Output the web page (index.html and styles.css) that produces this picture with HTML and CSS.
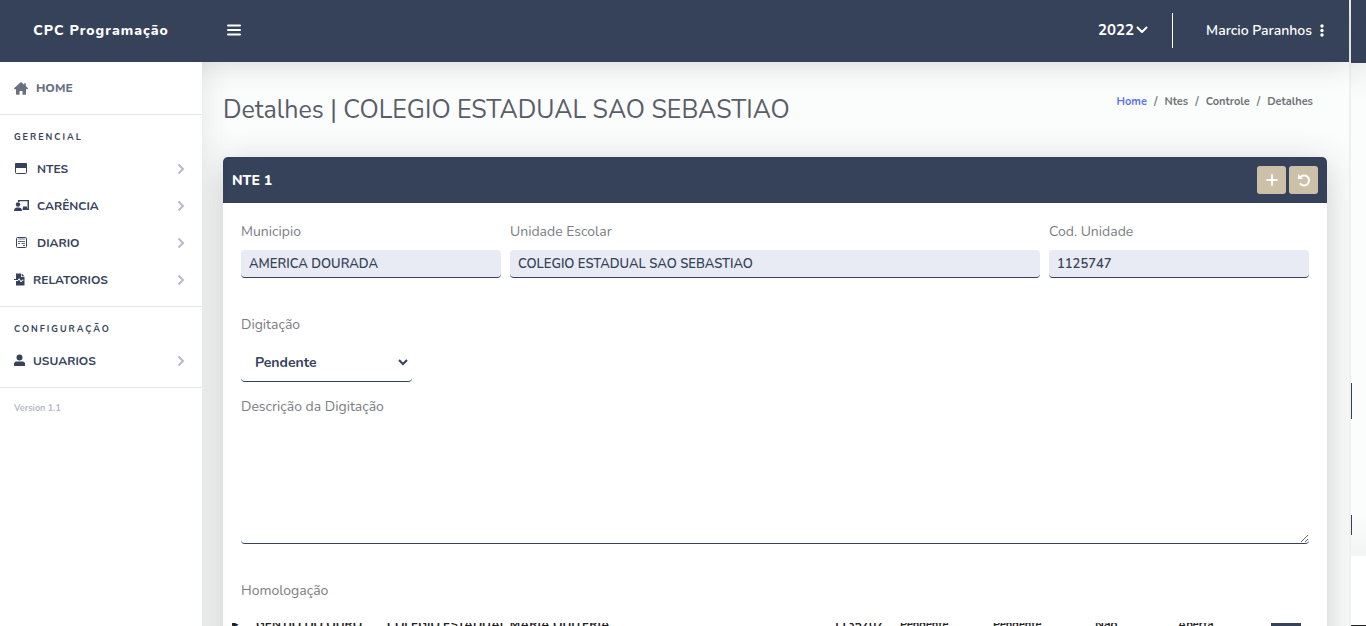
FILE: index.html
```html
<!DOCTYPE html>
<html lang="pt-BR">
<head>
<meta charset="utf-8">
<title>CPC Programação</title>
<link rel="stylesheet" href="styles.css">
</head>
<body>
<div class="screen">
  <div class="app">
    <header class="topbar">
      <a class="brand" href="#">CPC Programação</a>
      <button class="icon-button" aria-label="Menu"><svg width="14" height="12" viewBox="0 0 14 12"><path d="M1 1.500h12M1 6h12M1 10.500h12" stroke="#fff" stroke-width="2" stroke-linecap="round"/></svg></button>
      <button class="year">2022 <svg width="12" height="8" viewBox="0 0 12 8"><path d="M1.500 1.500 6 6l4.500-4.500" fill="none" stroke="#fff" stroke-width="2" stroke-linecap="round" stroke-linejoin="round"/></svg></button>
      <button class="user">Marcio Paranhos <svg width="4" height="13" viewBox="0 0 4 13" fill="#fff"><circle cx="2" cy="2" r="1.700"/><circle cx="2" cy="6.500" r="1.700"/><circle cx="2" cy="11" r="1.700"/></svg></button>
    </header>
    <div class="columns">
      <nav class="sidebar">
        <a class="home" href="#"><svg width="14" height="13" viewBox="0 0 14 13" fill="#69707f"><path d="M7 0 0 6.200q.2 1 1 1h1V12q0 .8.800.8h2.700V9h3v3.800h2.700q.8 0 .8-.8V7.200h1q.8 0 1-1L11.800 4V1.200h-1.600v1.500z"/></svg>HOME</a>
        <section class="group">
          <h2>GERENCIAL</h2>
          <a class="item" href="#"><svg class="glyph" width="15" height="13" viewBox="0 0 15 13"><rect x="1.500" y="1.500" width="11" height="10" rx="1" fill="#fff" stroke="#36425a"/><path d="M1 2q0-1 1-1h10q1 0 1 1v4H1z" fill="#36425a"/></svg><span>NTES</span><svg class="chevron" viewBox="0 0 8 12"><path d="m1.500 1.500 4.500 4.500-4.500 4.500"/></svg></a>
          <a class="item" href="#"><svg class="glyph" width="15" height="13" viewBox="0 0 15 13" fill="#36425a"><circle cx="4" cy="5.500" r="2.200"/><path d="M0 12q0-3.500 3.200-3.500h1.600Q8 8.500 8 12zM4 1h11v10H8.500V9.500h5V2.200h-8V3H4zM9 7.500h4V10H9z"/></svg><span>CARÊNCIA</span><svg class="chevron" viewBox="0 0 8 12"><path d="m1.500 1.500 4.500 4.500-4.500 4.500"/></svg></a>
          <a class="item" href="#"><svg class="glyph" width="15" height="13" viewBox="0 0 15 13" fill="none" stroke="#36425a"><rect x="2.500" y="1.500" width="10" height="10" rx="1"/><path d="M4 3.500 5 2.500l1 1 1-1 1 1 1-1 1 1 1-1M4 5.500h7M4 7.500h2M7.500 7.500H11M9 9.500h2" stroke-width=".8"/></svg><span>DIARIO</span><svg class="chevron" viewBox="0 0 8 12"><path d="m1.500 1.500 4.500 4.500-4.500 4.500"/></svg></a>
          <a class="item narrow" href="#"><svg class="glyph" width="11" height="13" viewBox="0 0 11 13"><path d="M2 .5h5V4h3.500v8.500H2zM7.700.5 10.500 3.300H7.700z" fill="#36425a"/><path d="M2 7.500h2l1.200-1.800L7 9l1-1.800h1.500" stroke="#fff" fill="none"/><path d="M0 6.500h3" stroke="#36425a"/></svg><span>RELATORIOS</span><svg class="chevron" viewBox="0 0 8 12"><path d="m1.500 1.500 4.500 4.500-4.500 4.500"/></svg></a>
        </section>
        <section class="group">
          <h2>CONFIGURAÇÃO</h2>
          <a class="item narrow" href="#"><svg class="glyph" width="11" height="13" viewBox="0 0 11 13" fill="#36425a"><circle cx="5.500" cy="3.500" r="3"/><path d="M0 12V10q0-2.500 2.500-2.500h6Q11 7.500 11 10v2z"/></svg><span>USUARIOS</span><svg class="chevron" viewBox="0 0 8 12"><path d="m1.500 1.500 4.500 4.500-4.500 4.500"/></svg></a>
        </section>
        <p class="version">Version 1.1</p>
      </nav>
      <main class="content">
        <div class="heading">
          <h1>Detalhes | COLEGIO ESTADUAL SAO SEBASTIAO</h1>
          <nav class="crumbs"><a href="#">Home</a><span>/</span><span>Ntes</span><span>/</span><span>Controle</span><span>/</span><span>Detalhes</span></nav>
        </div>
        <section class="card">
          <div class="card-head">
            <h2>NTE 1</h2>
            <button aria-label="Adicionar"><svg width="14" height="14" viewBox="0 0 14 14"><path d="M7 2v10M2 7h10" stroke="#fff" stroke-width="1.800" stroke-linecap="round"/></svg></button>
            <button aria-label="Voltar"><svg width="14" height="14" viewBox="0 0 14 14" fill="none" stroke="#fff"><path d="M3 4.500A5 5 0 1 1 3.500 11" stroke-width="2" stroke-linecap="round"/><path d="M1 1v5h5z" fill="#fff" stroke="none"/></svg></button>
          </div>
          <form class="card-body">
            <div class="row">
              <div class="field"><label for="mun">Municipio</label><input id="mun" value="AMERICA DOURADA" readonly></div>
              <div class="field"><label for="esc">Unidade Escolar</label><input id="esc" value="COLEGIO ESTADUAL SAO SEBASTIAO" readonly></div>
              <div class="field"><label for="cod">Cod. Unidade</label><input id="cod" value="1125747" readonly></div>
            </div>
            <div class="field status"><label for="dig">Digitação</label>
              <div class="select-wrap"><select id="dig"><option>Pendente</option></select><svg class="caret" width="10" height="7" viewBox="0 0 10 7"><path d="m1 1 4 4 4-4" fill="none" stroke="#36425a" stroke-width="2"/></svg></div></div>
            <div class="field desc"><label for="des">Descrição da Digitação</label><textarea id="des"></textarea></div>
            <p class="label">Homologação</p>
          </form>
          <table class="peek"><tr><td class="mark"><div>▸</div></td><td class="town"><div>GENTIO DO OURO</div></td><td><div>COLEGIO ESTADUAL MARIA QUITERIA</div></td><td class="code"><div>1135707</div></td><td class="state"><div>Pendente</div></td><td class="state wide"><div>Pendente</div></td><td class="flag"><div>Não</div></td><td class="state"><div>Aberta</div></td><td class="action"><button aria-label="Ver"></button></td></tr></table>
        </section>
      </main>
    </div>
  </div>
  <aside class="edge"><div class="edge-head"></div><div class="edge-body"><i></i><i class="second"></i></div><div class="edge-foot"></div></aside>
</div>
</body>
</html>
```

FILE: styles.css
```css
* { box-sizing: border-box; }
body { margin: 0; font-family: Nunito, Lato, sans-serif; font-size: 14px; color: #36425a; background: #fbfdfc; }
h1, h2, p { margin: 0; font-weight: normal; }
a { color: inherit; text-decoration: none; }
button { border: 0; padding: 0; background: none; color: inherit; font: inherit; }
.screen { display: grid; grid-template-columns: 1fr 17px; height: 100vh; overflow: hidden; }
.app { display: flex; flex-direction: column; min-width: 0; min-height: 0; }
.topbar { display: flex; flex: none; align-items: center; height: 62px; padding: 0 25px 2px 0; background: #36425a; color: #fff; box-shadow: 0 4px 28px rgba(40, 55, 50, .16); z-index: 1; }
.brand { width: 202px; text-align: center; font-size: 14px; font-weight: 800; letter-spacing: 1px; }
.icon-button { display: flex; margin-left: 25px; }
.year { display: flex; align-items: center; gap: 2px; height: 35px; margin-left: auto; padding-right: 24px; border-right: 1px solid #fff; font-size: 15px; font-weight: 700; }
.user { display: flex; align-items: center; gap: 8px; margin-left: 33px; font-size: 14px; font-weight: 600; }
.columns { display: grid; grid-template-columns: 202px 1fr; flex: 1; min-height: 0; }
.sidebar { z-index: 2; background: #fff; box-shadow: 2px 0 28px rgba(40, 55, 50, .12); clip-path: inset(0 -40px 0 0); }
.home { display: flex; align-items: center; gap: 8px; height: 53px; padding-left: 14px; border-bottom: 1px solid #e3e6f0; color: #69707f; font-size: 12px; font-weight: 800; }
.group { padding: 15px 0 8px; border-bottom: 1px solid #e3e6f0; }
.group h2 { padding-left: 14px; font-size: 9px; line-height: 14px; font-weight: 700; letter-spacing: 2px; }
.item { display: flex; align-items: center; height: 37px; padding: 0 17px 0 14px; font-size: 12px; font-weight: 700; }
.group h2 + .item { margin-top: 6px; }
.item span { margin: 0 auto 0 8px; }
.chevron { width: 8px; height: 12px; fill: none; stroke: #b7b9cc; stroke-width: 2; }
.version { padding: 14px; color: #b7b9cc; font-size: 9px; line-height: 12px; font-weight: 700; }
.content { min-width: 0; padding: 0 22px 0 21px; }
.heading { display: flex; justify-content: space-between; height: 95px; }
h1 { margin-top: 31px; color: #5a5c69; font-size: 25px; line-height: 34px; font-weight: 400; white-space: nowrap; }
.crumbs { display: flex; gap: 7px; margin: 33px 14px 0 0; font-size: 11px; line-height: 14px; font-weight: 700; color: #717378; }
.crumbs a { color: #5f73ee; }
.card { min-height: 520px; border-radius: 5px; background: #fff; box-shadow: 0 8px 36px rgba(40, 50, 46, .24); }
.card-head { display: flex; align-items: center; gap: 3px; height: 46px; padding: 0 9px; border-radius: 5px 5px 0 0; background: #36425a; color: #fff; }
.card-head h2 { margin-right: auto; font-size: 14px; font-weight: 800; }
.card-head button { display: grid; place-items: center; width: 29px; height: 28px; border-radius: 3px; background: #cdc0a9; }
.card-body { padding: 19px 18px 0; }
.row { display: grid; grid-template-columns: minmax(0, 260fr) minmax(0, 530fr) minmax(0, 260fr); gap: 9px; }
label, .label { display: block; color: #7b7d83; font-size: 14px; line-height: 20px; }
.field input { display: block; width: 100%; height: 28px; margin-top: 8px; padding: 0 8px; border: 0; border-bottom: 1px solid #36425a; border-radius: 4px; background: #e8ebf3; color: #36425a; font: 600 13px Nunito, Lato, sans-serif; }
.status { margin-top: 37px; }
.select-wrap { display: grid; align-items: center; width: 171px; margin-top: 8px; }
.select-wrap select, .caret { grid-area: 1 / 1; }
.caret { justify-self: end; margin-right: 4px; pointer-events: none; }
select { appearance: none; width: 100%; height: 39px; padding: 0 14px; border: 0; border-bottom: 1px solid #36425a; border-radius: 4px; background: #fff; color: #36425a; font: 700 14px Nunito, Lato, sans-serif; }
.desc { margin-top: 15px; }
textarea { display: block; width: 100%; height: 119px; margin-top: 8px; border: 0; border-bottom: 1px solid #36425a; border-radius: 4px; background: #fff; font: 14px Nunito, Lato, sans-serif; resize: vertical; }
.label { margin-top: 37px; }
.peek { width: 100%; margin-top: 22px; padding: 0 26px 0 9px; border-spacing: 0; table-layout: fixed; color: #222; font-size: 12px; font-weight: 700; }
.peek td { padding: 0; }
.peek div { height: 3px; overflow: hidden; line-height: 3px; white-space: nowrap; }
.peek .mark { width: 24px; }
.peek .town { width: 131px; }
.peek .code { width: 67px; }
.peek .state { width: 93px; font-size: 11px; }
.peek .wide { width: 102px; }
.peek .flag { width: 83px; }
.peek .action { width: 30px; }
.peek button { display: block; width: 30px; height: 3px; background: #36425a; }
.edge { display: flex; flex-direction: column; border-left: 2px solid #eef0f0; background: #fff; }
.edge-head { height: 63px; background: #36425a; }
.edge-body { height: 493px; padding-top: 320px; background: linear-gradient(#f2f4f3, #fbfdfc 40px, #fbfdfc 450px, #f3f5f4); }
.edge-body i { display: block; width: 1px; height: 36px; background: #36425a; }
.edge-body .second { height: 20px; margin-top: 96px; }
.edge-foot { height: 1px; margin-top: auto; background: #222; }
```
